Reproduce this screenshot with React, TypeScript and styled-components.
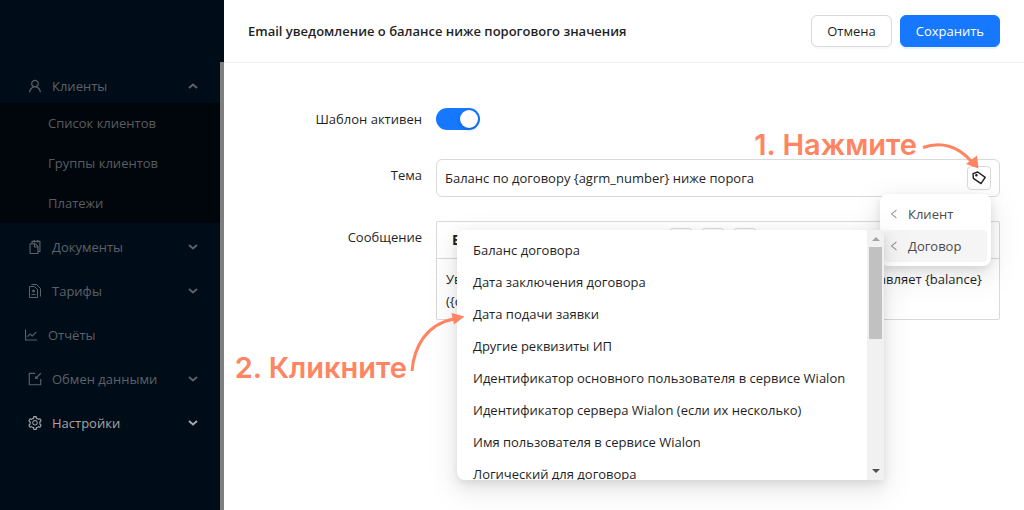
import React from 'react';
import styled, { createGlobalStyle } from 'styled-components';
import {
  AiOutlineUser,
  AiOutlineSnippets,
  AiOutlineLineChart,
  AiOutlineImport,
  AiOutlineSetting,
  AiOutlineLeft,
} from 'react-icons/ai';

const GlobalStyle = createGlobalStyle`
  *, *::before, *::after { box-sizing: border-box; }
  body { margin: 0; background: #fff; }
  body, button, input, textarea {
    font-family: 'Open Sans', 'Noto Sans', sans-serif;
    font-size: 13px;
    line-height: 20px;
    color: #1f1f1f;
  }
  ul { list-style: none; margin: 0; padding: 0; }
`;

const accent = '#ff8562';

const Page = styled.div`
  display: grid;
  grid-template-columns: 224px minmax(0, 1fr);
  min-height: 100vh;
`;

const Sidebar = styled.aside`
  display: flex;
  flex-direction: column;
  background: #000c17;
`;

const Brand = styled.div`
  height: 62px;
`;

const Scroller = styled.nav`
  flex: 1;
  padding-top: 7px;
  border-right: 4px solid #7f7f7f;
`;

const NavButton = styled.button<{ $open?: boolean; $flat?: boolean; $active?: boolean }>`
  display: flex;
  align-items: center;
  gap: 9px;
  width: 100%;
  height: ${(p) => (p.$open ? 34 : 44)}px;
  padding: 0 22px 0 ${(p) => (p.$flat ? 23 : 27)}px;
  border: 0;
  background: none;
  text-align: left;
  color: ${(p) => (p.$active ? '#a6a8aa' : '#5c6268')};

  > svg:first-child { width: 16px; height: 16px; flex: none; }
`;

const NavLabel = styled.span`
  flex: 1;
`;

const SubMenu = styled.ul`
  margin-bottom: 2px;
  background: #00060b;
`;

const SubLink = styled.a`
  display: block;
  padding: 10px 0 10px 48px;
  color: #595d60;
  text-decoration: none;
`;

const Header = styled.header`
  display: flex;
  align-items: center;
  gap: 8px;
  height: 63px;
  padding: 0 24px;
  border-bottom: 1px solid #f0f0f0;
`;

const Title = styled.h1`
  flex: 1;
  margin: 0;
  font-size: 13px;
  line-height: 20px;
  font-weight: 600;
`;

const Button = styled.button<{ $primary?: boolean }>`
  height: 32px;
  padding: 0 15px;
  border: 1px solid ${(p) => (p.$primary ? '#1677ff' : '#d9d9d9')};
  border-radius: 6px;
  background: ${(p) => (p.$primary ? '#1677ff' : '#fff')};
  color: ${(p) => (p.$primary ? '#fff' : '#1f1f1f')};
  box-shadow: 0 2px 0 ${(p) => (p.$primary ? 'rgba(5, 145, 255, 0.1)' : 'rgba(0, 0, 0, 0.02)')};
`;

const Form = styled.form`
  display: flex;
  flex-direction: column;
  gap: 24px;
  padding: 40px 24px;
`;

const Field = styled.div`
  display: grid;
  grid-template-columns: minmax(0, 1fr) minmax(0, 3fr);
`;

const Label = styled.label`
  padding: 6px 14px 6px 0;
  text-align: right;
`;

const Control = styled.div`
  position: relative;
  display: flex;
  align-items: center;
`;

const Switch = styled.input`
  appearance: none;
  display: flex;
  align-items: center;
  justify-content: flex-end;
  width: 44px;
  height: 22px;
  margin: 0;
  padding: 2px;
  border-radius: 11px;
  background: #1677ff;

  &::before {
    content: '';
    width: 18px;
    height: 18px;
    border-radius: 50%;
    background: #fff;
    box-shadow: 0 2px 4px rgba(0, 35, 11, 0.2);
  }
`;

const InputFrame = styled.div`
  display: flex;
  align-items: center;
  flex: 1;
  height: 38px;
  padding: 0 8px;
  border: 1px solid #d9d9d9;
  border-radius: 6px;
`;

const TextInput = styled.input`
  flex: 1;
  min-width: 0;
  padding: 0;
  border: 0;
  outline: 0;
  background: none;
`;

const IconButton = styled.button`
  display: flex;
  align-items: center;
  justify-content: center;
  width: 24px;
  height: 24px;
  padding: 0;
  border: 1px solid #d9d9d9;
  border-radius: 4px;
  background: #fff;

  svg { width: 16px; height: 16px; }
`;

const Editor = styled.div`
  flex: 1;
  border: 1px solid #d9d9d9;
  border-radius: 2px;
`;

const Toolbar = styled.div`
  display: flex;
  gap: 8px;
  height: 37px;
  padding: 6px 8px;
  border-bottom: 1px solid #d9d9d9;
`;

const FormatButton = styled.button`
  width: 200px;
  margin-right: 16px;
  padding: 0 7px;
  border: 0;
  background: none;
  text-align: left;
  font-size: 14px;
  font-weight: 700;
`;

const Message = styled.textarea`
  display: block;
  width: 100%;
  height: 60px;
  padding: 9px;
  border: 0;
  outline: 0;
  resize: none;
  background: none;
  line-height: 22px;
  overflow: hidden;
`;

const popupShadow = '0 6px 16px rgba(0, 0, 0, 0.08), 0 3px 6px rgba(0, 0, 0, 0.06), 0 9px 28px 8px rgba(0, 0, 0, 0.05)';

const Menu = styled.ul`
  position: absolute;
  z-index: 2;
  top: 35px;
  right: 9px;
  width: 111px;
  padding: 4px;
  border-radius: 8px;
  background: #fff;
  box-shadow: ${popupShadow};
`;

const MenuItem = styled.li<{ $active?: boolean }>`
  display: flex;
  align-items: center;
  gap: 8px;
  height: 32px;
  padding: 0 4px;
  border-radius: 4px;
  background: ${(p) => (p.$active ? '#f5f5f5' : '#fff')};
  color: #4b4b4b;

  svg { width: 12px; height: 12px; color: #8c8c8c; }
`;

const Popup = styled.div`
  position: absolute;
  z-index: 3;
  top: 71px;
  right: 116px;
  display: flex;
  width: 427px;
  height: 250px;
  border-radius: 8px 0 0 8px;
  background: #fff;
  box-shadow: ${popupShadow};
`;

const Options = styled.ul`
  flex: 1;
  padding: 4px;
  overflow: hidden;
`;

const Option = styled.li`
  padding: 6px 12px;
  white-space: nowrap;
`;

const ScrollTrack = styled.div`
  display: flex;
  flex-direction: column;
  align-items: center;
  width: 17px;
  padding: 7px 2px;
  background: #f1f1f1;
`;

const ScrollThumb = styled.div`
  width: 100%;
  height: 92px;
  margin: 6px 0 auto;
  background: #c1c1c1;
`;

const Arrow = styled.span<{ $up?: boolean }>`
  border: 4px solid transparent;
  border-top: ${(p) => (p.$up ? '0' : '4px solid #505050')};
  border-bottom: ${(p) => (p.$up ? '4px solid #a3a3a3' : '0')};
`;

const Note = styled.div`
  position: absolute;
  z-index: 4;
  display: flex;
  color: ${accent};
  font-family: Inter, Roboto, sans-serif;
  font-size: 29px;
  line-height: 36px;
  font-weight: 600;
  white-space: nowrap;
  pointer-events: none;
`;

const ClickNote = styled(Note)`
  top: -32px;
  right: 21px;
`;

const PickNote = styled(Note)`
  top: 80px;
  right: 419px;
  align-items: flex-end;
`;

const Chevron = ({ up }: { up?: boolean }) => (
  <svg width="10" height="6" viewBox="0 0 10 6" fill="none" stroke="currentColor" strokeWidth="2" aria-hidden>
    <path d={up ? 'M1 5l4-3.5L9 5' : 'M1 1l4 3.5L9 1'} />
  </svg>
);

const TariffIcon = () => (
  <svg viewBox="0 0 16 16" fill="none" stroke="currentColor" aria-hidden>
    <path d="M2.5 3.5h5l3 3v8h-8zM4.5 1.5h5l4 4v8" />
    <path d="M4.5 11.5h4" />
    <circle cx="6.5" cy="8" r="1" fill="currentColor" />
  </svg>
);

const TagIcon = () => (
  <svg viewBox="0 0 16 16" fill="none" stroke="currentColor" strokeWidth="1.4" strokeLinejoin="round" aria-hidden>
    <path d="M2 3.6L6.8 2l7.4 5.4-4.2 6.2-7.6-5.2z" />
    <circle cx="5.4" cy="5.2" r="0.6" />
  </svg>
);

type Entry = { label: string; icon: React.ReactNode; children?: string[]; flat?: boolean; active?: boolean };

const entries: Entry[] = [
  { label: 'Клиенты', icon: <AiOutlineUser />, children: ['Список клиентов', 'Группы клиентов', 'Платежи'] },
  { label: 'Документы', icon: <AiOutlineSnippets /> },
  { label: 'Тарифы', icon: <TariffIcon /> },
  { label: 'Отчёты', icon: <AiOutlineLineChart />, flat: true },
  { label: 'Обмен данными', icon: <AiOutlineImport /> },
  { label: 'Настройки', icon: <AiOutlineSetting />, active: true },
];

const options = [
  'Баланс договора',
  'Дата заключения договора',
  'Дата подачи заявки',
  'Другие реквизиты ИП',
  'Идентификатор основного пользователя в сервисе Wialon',
  'Идентификатор сервера Wialon (если их несколько)',
  'Имя пользователя в сервисе Wialon',
  'Логический для договора',
];

export default function App() {
  return (
    <Page>
      <GlobalStyle />
      <Sidebar>
        <Brand />
        <Scroller>
          <ul>
            {entries.map((e) => (
              <li key={e.label}>
                <NavButton $open={!!e.children} $flat={e.flat} $active={e.active}>
                  {e.icon}
                  <NavLabel>{e.label}</NavLabel>
                  {!e.flat && <Chevron up={!!e.children} />}
                </NavButton>
                {e.children && (
                  <SubMenu>
                    {e.children.map((c) => (
                      <li key={c}>
                        <SubLink href="#">{c}</SubLink>
                      </li>
                    ))}
                  </SubMenu>
                )}
              </li>
            ))}
          </ul>
        </Scroller>
      </Sidebar>
      <main>
        <Header>
          <Title>Email уведомление о балансе ниже порогового значения</Title>
          <Button>Отмена</Button>
          <Button $primary>Сохранить</Button>
        </Header>
        <Form>
          <Field>
            <Label htmlFor="active">Шаблон активен</Label>
            <Control>
              <Switch id="active" type="checkbox" role="switch" defaultChecked />
            </Control>
          </Field>
          <Field>
            <Label htmlFor="subject">Тема</Label>
            <Control>
              <InputFrame>
                <TextInput id="subject" defaultValue="Баланс по договору {agrm_number} ниже порога" />
                <IconButton type="button" aria-label="Вставить тег">
                  <TagIcon />
                </IconButton>
              </InputFrame>
              <Menu>
                <MenuItem><AiOutlineLeft />Клиент</MenuItem>
                <MenuItem $active><AiOutlineLeft />Договор</MenuItem>
              </Menu>
              <Popup>
                <Options>
                  {options.map((o) => <Option key={o}>{o}</Option>)}
                </Options>
                <ScrollTrack>
                  <Arrow $up />
                  <ScrollThumb />
                  <Arrow />
                </ScrollTrack>
                <PickNote>
                  2. Кликните
                  <svg width="58" height="76" viewBox="0 0 58 76" fill="none" aria-hidden>
                    <path d="M5 61C7 36 20 14 47 9" stroke={accent} strokeWidth="3" />
                    <path d="M44.5 3L57.5 6.5L47 14.5z" fill={accent} />
                  </svg>
                </PickNote>
              </Popup>
              <ClickNote>
                1. Нажмите
                <svg width="62" height="44" viewBox="0 0 62 44" fill="none" aria-hidden>
                  <path d="M6 20.5C24 14 41 19 54 34" stroke={accent} strokeWidth="3" />
                  <path d="M49 37L60 28.5L61.5 41.5z" fill={accent} />
                </svg>
              </ClickNote>
            </Control>
          </Field>
          <Field>
            <Label htmlFor="message">Сообщение</Label>
            <Control>
              <Editor>
                <Toolbar>
                  <FormatButton type="button">B</FormatButton>
                  <IconButton type="button" aria-label="Отменить" />
                  <IconButton type="button" aria-label="Повторить" />
                  <IconButton type="button" aria-label="Ссылка" />
                </Toolbar>
                <Message
                  id="message"
                  defaultValue={'Уведомляем Вас, что баланс Вашего договора {agrm_number} – составляет {balance}\n({currency}).'}
                />
              </Editor>
            </Control>
          </Field>
        </Form>
      </main>
    </Page>
  );
}
